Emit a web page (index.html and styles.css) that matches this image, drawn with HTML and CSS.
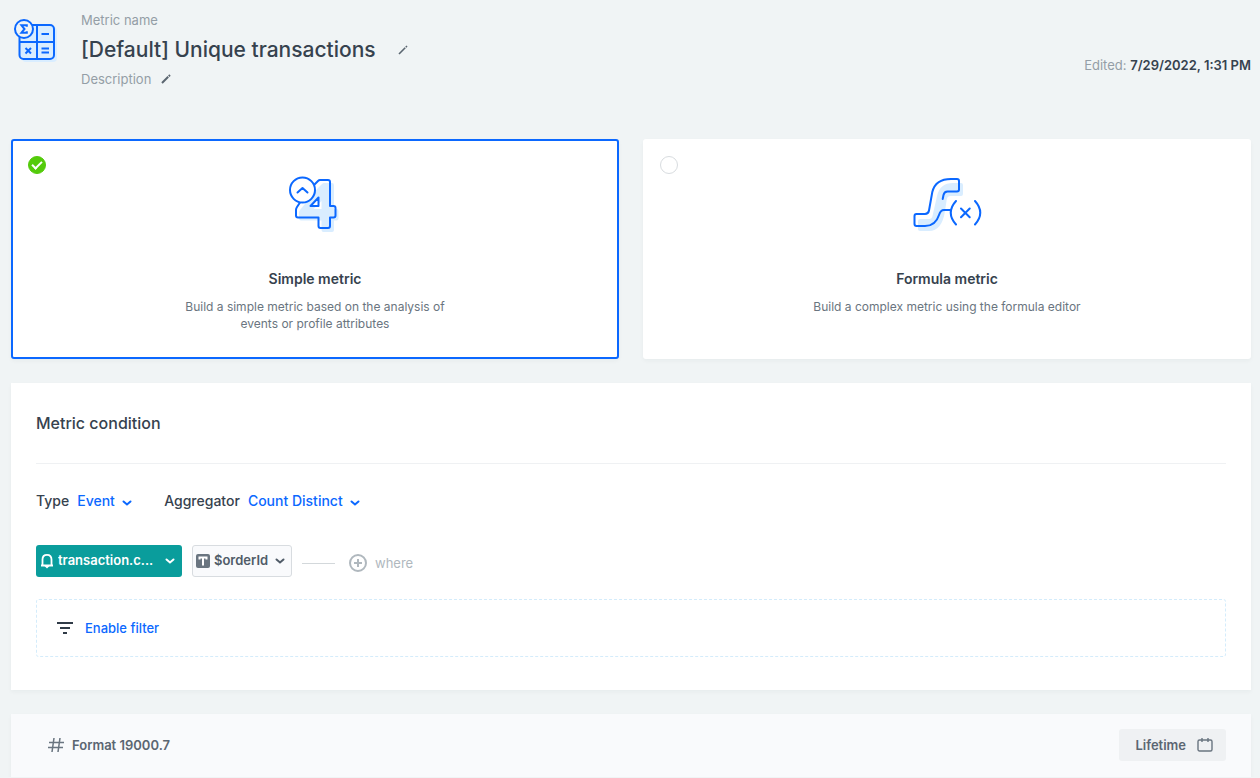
FILE: index.html
```html
<!DOCTYPE html>
<html lang="en">
<head>
  <meta charset="UTF-8" />
  <meta name="viewport" content="width=device-width, initial-scale=1.0" />
  <title>[Default] Unique transactions</title>
  <link rel="stylesheet" href="styles.css">
</head>
<body>
  <header class="page-header">
    <svg class="metric-logo" width="44" height="44" viewBox="0 0 44 44" fill="none" stroke="#0b68ff" stroke-width="2" stroke-linecap="round">
      <rect x="9" y="9" width="35" height="35" rx="4" fill="#d9edff" stroke="none"/>
      <rect x="6.500" y="7" width="34.500" height="34" rx="4" fill="#d9edff"/>
      <path d="M24 7v34M7 24h34"/>
      <path d="M28.500 16h7.500M28.500 30.500H36M28.500 34.500H36M12.500 30l5.500 5.500M18 30l-5.500 5.500" stroke-linecap="butt"/>
      <circle cx="11" cy="11" r="9" fill="#f0f4f6"/>
      <path d="M13.800 8.800V7.300H8.500L11.500 11l-3 3.700h5.300v-1.500" stroke-linecap="butt"/>
    </svg>
    <div class="metric-info">
      <div class="metric-label">Metric name</div>
      <div class="metric-title">
        <h1>[Default] Unique transactions</h1>
        <button class="edit" aria-label="Edit metric name">
          <svg width="10" height="10" viewBox="0 0 10 10" stroke="#5b6670" stroke-width="1.600"><path d="M1 9l6.200-6.200M7.800 2.200l1.200-1.200"/></svg>
        </button>
      </div>
      <div class="metric-desc">
        Description
        <button class="edit" aria-label="Edit description">
          <svg width="10" height="10" viewBox="0 0 10 10" stroke="#5b6670" stroke-width="2"><path d="M1 9l6.200-6.200M7.800 2.200l1.200-1.200"/></svg>
        </button>
      </div>
    </div>
    <div class="edited">Edited: <strong>7/29/2022, 1:31 PM</strong></div>
  </header>

  <main>
    <div class="metric-types">
      <label class="type-card">
        <input type="radio" name="metric-type" value="simple" checked>
        <svg class="type-icon" width="72" height="60" viewBox="0 0 72 60" fill="none" stroke="#0b68ff" stroke-width="2" stroke-linejoin="round" stroke-linecap="round">
          <path d="M39 13l4-4q1-1 2-1h8q2 0 2 2v24h2.500q2 0 2 2v7.500q0 2-2 2H55V55q0 2-2 2h-8.500q-2 0-2-2v-9.500H22q-2 0-2-2V38q0-2 1-3zM42.500 26v8h-8z" fill="#d9edff" fill-rule="evenodd" stroke="none"/>
          <path d="M35 10l4-4q1-1 2-1h8q2 0 2 2v24h3.500q2 0 2 2v7.500q0 2-2 2H51V51q0 2-2 2h-7.500q-2 0-2-2v-8.500H19q-2 0-2-2V35q0-1.500 1-3l3-4.500"/>
          <path d="M39.500 22.500V31h-8z" fill="#fff"/>
          <circle cx="23.500" cy="15" r="12.500" fill="#fff"/>
          <path d="M18.500 17.500l5-4.500 5 4.500"/>
        </svg>
        <span class="type-name">Simple metric</span>
        <span class="type-text">Build a simple metric based on the analysis of events or profile attributes</span>
      </label>
      <label class="type-card">
        <input type="radio" name="metric-type" value="formula">
        <svg class="type-icon" width="72" height="60" viewBox="0 0 72 60" fill="none" stroke="#0b68ff" stroke-width="2" stroke-linejoin="round" stroke-linecap="round">
          <path d="M42 8h8q2 0 2 2v9q0 2-2 2H39.500q-3 0-3.700 3L34 36q-3 20-16 20H9q-2 0-2-2v-8q0-2 2-2h9q3 0 3.500-3L26 21Q29 8 42 8z" fill="#d9edff" stroke="none"/>
          <path d="M31.700 24l.8-4q.8-3.500 4-3.500h9.500q2 0 2-2V6q0-2-2-2h-6Q24.500 4 21.300 17L18 35.500q-.7 3.500-4 3.500H5.500q-2 0-2 2v8q0 2 2 2H14q10.500 0 14-11 1.500-5 5-5h6.500"/>
          <path d="M45 26q-10.500 11.700 0 23.500M64 26q10.500 11.700 0 23.500M50 33.500l8.700 8.700M58.700 33.500L50 42.200"/>
        </svg>
        <span class="type-name">Formula metric</span>
        <span class="type-text">Build a complex metric using the formula editor</span>
      </label>
    </div>

    <section class="panel condition">
      <h2>Metric condition</h2>

      <div class="options">
        <label for="type">Type</label>
        <div class="dropdown">
          <select id="type"><option>Event</option></select>
          <svg class="chevron" width="10" height="8" viewBox="0 0 10 8"><path d="M1.500 2.500L5 5.500l3.500-3"/></svg>
        </div>
        <label for="aggregator">Aggregator</label>
        <div class="dropdown">
          <select id="aggregator"><option>Count Distinct</option></select>
          <svg class="chevron" width="10" height="8" viewBox="0 0 10 8"><path d="M1.500 2.500L5 5.500l3.500-3"/></svg>
        </div>
      </div>

      <div class="event-row">
        <div class="dropdown pill event">
          <svg class="pill-icon" width="16" height="16" viewBox="0 0 16 16" fill="none" stroke="#fff" stroke-width="1.800">
            <path d="M2 12.500h12M3.500 12V6.500Q3.500 1.800 8 1.800t4.500 4.700V12"/>
            <path d="M5.500 13h5L8 15.500z" fill="#fff" stroke="none"/>
          </svg>
          <select aria-label="Event"><option>transaction.c...</option></select>
          <svg class="chevron" width="10" height="8" viewBox="0 0 10 8"><path d="M1.500 2.500L5 5.500l3.500-3"/></svg>
        </div>
        <div class="dropdown pill param">
          <svg class="pill-icon" width="16" height="16" viewBox="0 0 16 16">
            <rect x="1" y="1" width="14" height="14" rx="2" fill="#6a7580"/>
            <path d="M4.500 6.500V4.500h7v2M8 4.500v8" fill="none" stroke="#fff" stroke-width="2"/>
          </svg>
          <select aria-label="Parameter"><option>$orderId</option></select>
          <svg class="chevron" width="10" height="8" viewBox="0 0 10 8"><path d="M1.500 2.500L5 5.500l3.500-3"/></svg>
        </div>
        <span class="line"></span>
        <button class="where">
          <svg width="18" height="18" viewBox="0 0 18 18" fill="none" stroke="#b0b8be" stroke-width="2"><circle cx="9" cy="9" r="8"/><path d="M9 5v8M5 9h8"/></svg>
          where
        </button>
      </div>

      <div class="filter">
        <button class="enable-filter">
          <svg width="16" height="12" viewBox="0 0 16 12" stroke="#303b47" stroke-width="2"><path d="M0 1h16M3 6h10M6 11h4"/></svg>
          Enable filter
        </button>
      </div>
    </section>

    <section class="panel format-bar">
      <button class="format">
        <svg width="16" height="14" viewBox="0 0 16 14" fill="none" stroke="#6a7580" stroke-width="1.500"><path d="M1 4.500h15M0 9.500h15M6 0L4 14M12 0l-2 14"/></svg>
        Format 19000.7
      </button>
      <button class="lifetime">
        Lifetime
        <svg width="16" height="16" viewBox="0 0 16 16" fill="none" stroke="#6a7580" stroke-width="1.400"><rect x="1" y="3" width="14" height="11" rx="1.500"/><path d="M5 1v4M11 1v4"/></svg>
      </button>
    </section>
  </main>
</body>
</html>
```
FILE: styles.css
```css
:root {
  --bg: #f0f4f5;
  --text: #36424e;
  --muted: #949ea6;
  --blue: #0b68ff;
  --teal: #0a9d9c;
}
* { box-sizing: border-box; }
body {
  margin: 0;
  padding: 10px 9px 0 11px;
  background: var(--bg);
  color: var(--text);
  font: 13px/20px Inter, "Liberation Sans", sans-serif;
}
h1, h2 { margin: 0; font-weight: 500; }
button, select {
  font: inherit;
  color: inherit;
  background: none;
  border: none;
  padding: 0;
  cursor: pointer;
}
svg { display: block; flex: none; }

.page-header {
  display: flex;
  align-items: flex-start;
  margin-bottom: 50px;
}
.metric-logo { margin: 8px 23px 0 2px; }
.metric-info {
  display: flex;
  flex-direction: column;
  gap: 5px;
  flex: 1;
  padding-left: 1px;
  color: var(--muted);
}
.metric-title { display: flex; align-items: center; gap: 22px; }
.metric-title h1 { color: var(--text); font-size: 21px; line-height: 29px; }
.metric-desc { display: flex; align-items: center; gap: 10px; }
.edited { padding-top: 45px; color: var(--muted); }
.edited strong { color: var(--text); font-weight: 600; }

.metric-types { display: flex; gap: 24px; margin-bottom: 24px; }
.type-card {
  position: relative;
  flex: 1;
  display: flex;
  flex-direction: column;
  align-items: center;
  min-height: 220px;
  padding: 34px 20px 24px;
  background: #fff;
  border: 2px solid #fff;
  border-radius: 3px;
  box-shadow: 0 2px 4px rgba(35, 41, 54, 0.04);
  text-align: center;
  cursor: pointer;
}
.type-card:has(input:checked) { border-color: var(--blue); }
.type-card input {
  appearance: none;
  position: absolute;
  top: 15px;
  left: 15px;
  width: 18px;
  height: 18px;
  margin: 0;
  border: 1px solid #d8dcdf;
  border-radius: 50%;
}
.type-card input:checked { background: #54cb0b; border-color: #54cb0b; }
.type-card input:checked::after {
  content: "";
  box-sizing: border-box;
  position: absolute;
  top: 4px;
  left: 3px;
  width: 10px;
  height: 6px;
  border: solid #fff;
  border-width: 0 0 2px 2px;
  transform: rotate(-45deg);
}
.type-icon { margin-bottom: 34px; }
.type-name { font-size: 14px; font-weight: 600; line-height: 20px; margin-bottom: 9px; }
.type-text { max-width: 280px; color: #6a7580; font-size: 12px; line-height: 17px; }

.panel {
  background: #fff;
  padding: 0 25px;
  box-shadow: 0 2px 4px rgba(35, 41, 54, 0.04);
}
.condition { padding-bottom: 33px; margin-bottom: 24px; }
.condition h2 {
  font-size: 16px;
  line-height: 80px;
  border-bottom: 1px solid #eff1f3;
}
.options {
  display: flex;
  align-items: center;
  gap: 8px;
  margin: 27px 0 34px;
  font-size: 14px;
  font-weight: 500;
}
.options .dropdown { color: var(--blue); margin-right: 24px; }
.options select { padding-right: 17px; }
.dropdown { position: relative; }
.dropdown select { appearance: none; display: block; height: 20px; }
.chevron {
  position: absolute;
  right: 0;
  top: 8px;
  fill: none;
  stroke: currentColor;
  stroke-width: 2;
  stroke-linecap: round;
  pointer-events: none;
}

.event-row { display: flex; align-items: center; margin-bottom: 22px; }
.pill { margin-right: 10px; font-weight: 600; }
.pill select { height: 32px; width: 100%; padding: 0 22px 2px; border-radius: 3px; }
.pill .chevron { top: 12px; right: 7px; }
.pill-icon { position: absolute; left: 3px; top: 8px; pointer-events: none; }
.event { width: 146px; color: #fff; }
.event select { background: var(--teal); }
.param { color: #505c68; }
.param select { background: #f9fafc; border: 1px solid #d8dce0; padding: 0 22px 2px 21px; }
.line { width: 33px; height: 1px; margin: 4px 14px 0 0; background: #d3d8db; }
.where { display: flex; align-items: center; gap: 8px; margin-top: 4px; color: #b0b8be; }

.filter {
  padding: 18px 20px;
  border: 1px dashed #d4ecfb;
  border-radius: 3px;
}
.enable-filter { display: flex; align-items: center; gap: 12px; color: var(--blue); font-weight: 500; }

.format-bar {
  display: flex;
  align-items: center;
  justify-content: space-between;
  padding: 15px 25px 16px;
  background: #f9fafc;
  color: #5b6672;
}
.format, .lifetime { display: flex; align-items: center; font-weight: 600; }
.format { gap: 8px; padding-left: 12px; }
.lifetime { height: 32px; gap: 11px; padding: 0 13px 0 16px; background: #eff1f3; border-radius: 3px; }
```
